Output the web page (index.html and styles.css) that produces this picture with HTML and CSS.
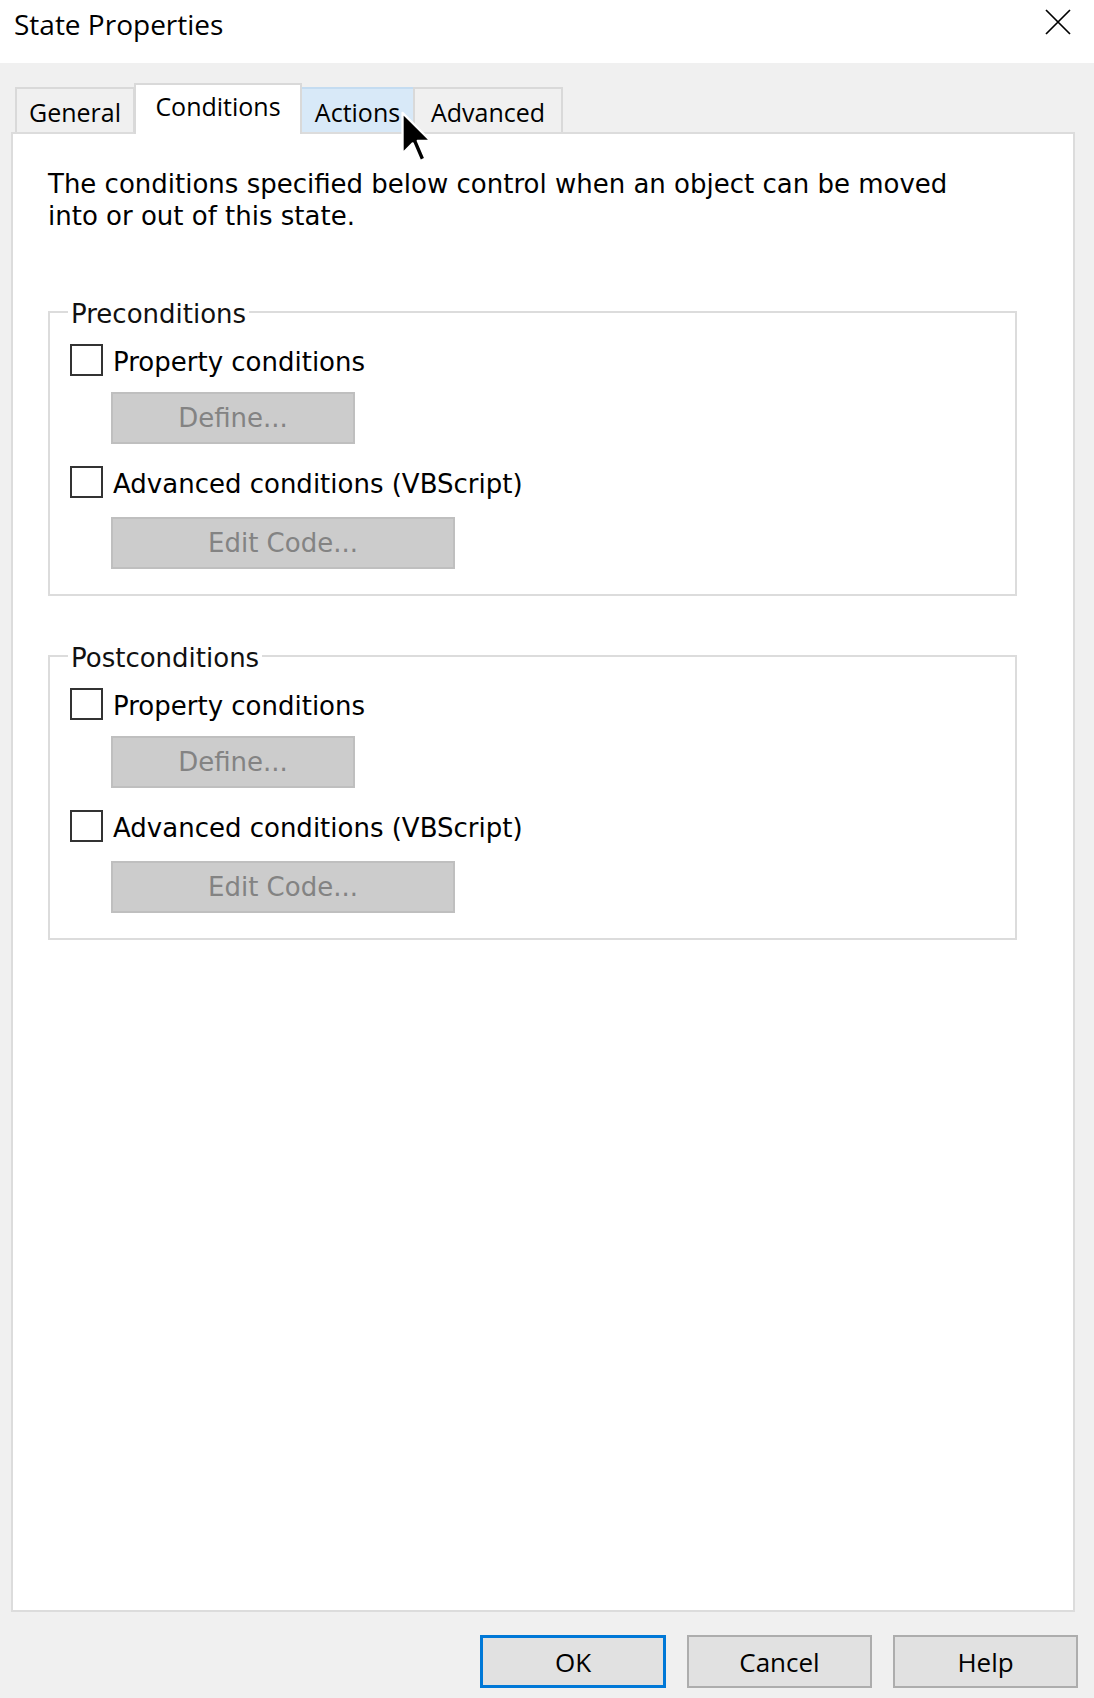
FILE: index.html
```html
<!DOCTYPE html>
<html lang="en">
<head>
    <meta charset="UTF-8">
    <meta name="viewport" content="width=device-width, initial-scale=1.0">
    <title>State Properties</title>
    <link rel="stylesheet" href="styles.css">
</head>
<body>
    <!-- Title bar -->
    <div class="titlebar">
        <span class="title">State Properties</span>
        <svg class="close" width="26" height="26" viewBox="0 0 26 26">
            <path d="M1 1 L25 25 M25 1 L1 25" stroke="#000" stroke-width="1.7" fill="none"/>
        </svg>
    </div>

    <!-- Tabs -->
    <div class="tabs">
        <div class="tab tab-general">General</div>
        <div class="tab tab-active">Conditions</div>
        <div class="tab tab-hover">Actions</div>
        <div class="tab tab-advanced">Advanced</div>
    </div>

    <div class="panel">
        <p class="intro">The conditions specified below control when an object can be moved into or out of this state.</p>

        <fieldset class="group">
            <legend>Preconditions</legend>
            <label class="option"><span class="check"></span><span class="option-text">Property conditions</span></label>
            <button class="btn-off btn-define" disabled>Define...</button>
            <label class="option option-next"><span class="check"></span><span class="option-text">Advanced conditions (VBScript)</span></label>
            <button class="btn-off btn-code" disabled>Edit Code...</button>
        </fieldset>

        <fieldset class="group group-post">
            <legend>Postconditions</legend>
            <label class="option"><span class="check"></span><span class="option-text">Property conditions</span></label>
            <button class="btn-off btn-define" disabled>Define...</button>
            <label class="option option-next"><span class="check"></span><span class="option-text">Advanced conditions (VBScript)</span></label>
            <button class="btn-off btn-code" disabled>Edit Code...</button>
        </fieldset>
    </div>

    <div class="footer">
        <button class="btn btn-default">OK</button>
        <button class="btn">Cancel</button>
        <button class="btn">Help</button>
    </div>

    <!-- mouse pointer over the Actions tab -->
    <svg class="cursor" width="33" height="54" viewBox="0 0 13 21">
        <path d="M1 1 V17 L5 13 L8 20 L10 19 L7 12 H12 Z" fill="#000" stroke="#fff" stroke-width="0.9" stroke-linejoin="round"/>
    </svg>
</body>
</html>
```

FILE: styles.css
```css
body {
    margin: 0;
    padding: 0;
    width: 1094px;
    height: 1698px;
    background-color: #f0f0f0;
    font-family: "DejaVu Sans", Verdana, sans-serif;
    color: #000;
    position: relative;
    overflow: hidden;
}
.titlebar {
    height: 63px;
    background: #ffffff;
    display: flex;
    justify-content: space-between;
    align-items: flex-start;
    box-sizing: border-box;
    padding: 4px 23px 0 14px;
}
.title {
    font-family: "Open Sans", "Noto Sans", sans-serif;
    font-size: 28px;
    line-height: 40px;
    color: #000;
}
.close {
    margin-top: 5px;
}
.tabs {
    display: flex;
    align-items: flex-end;
    padding: 20px 0 0 15px;
}
.tab {
    box-sizing: border-box;
    height: 45px;
    padding: 6px 0 3px;
    border: 2px solid #d9d9d9;
    border-bottom: none;
    background: #f0f0f0;
    font-family: "Open Sans", "Noto Sans", sans-serif;
    font-size: 25px;
    line-height: 34px;
    text-align: center;
    color: #000;
}
.tab-general {
    width: 120px;
}
.tab-active {
    width: 168px;
    height: 51px;
    margin: 0 0 -2px -1px;
    padding-top: 4px;
    background: #ffffff;
    position: relative;
    z-index: 1;
}
.tab-hover {
    width: 115px;
    margin-left: -2px;
    background: #d8e9f8;
    border-color: #c4dcf1;
}
.tab-advanced {
    width: 150px;
    margin-left: -2px;
}
.panel {
    box-sizing: border-box;
    width: 1064px;
    height: 1480px;
    margin-left: 11px;
    padding: 34px 0 0 35px;
    background: #ffffff;
    border: 2px solid #dcdcdc;
}
.intro {
    margin: 0;
    max-width: 950px;
    font-size: 26px;
    line-height: 32px;
}
.group {
    box-sizing: border-box;
    width: 969px;
    margin: 65px 0 0;
    padding: 17px 0 25px 20px;
    border: 2px solid #dcdcdc;
    min-inline-size: 0;
}
.group-post {
    margin-top: 45px;
}
.group legend {
    margin-left: -2px;
    padding: 4px 3px 0;
    font-size: 26px;
    line-height: 26px;
    color: #111;
}
.option {
    display: flex;
    align-items: center;
    height: 32px;
}
.option-next {
    margin-top: 22px;
}
.check {
    box-sizing: border-box;
    width: 33px;
    height: 32px;
    border: 2px solid #333;
    background: #fff;
}
.option-text {
    margin-left: 10px;
    padding-top: 4px;
    font-size: 26px;
    line-height: 28px;
}
.btn-off {
    display: block;
    box-sizing: border-box;
    height: 52px;
    margin: 16px 0 0 41px;
    background: #cccccc;
    border: 2px solid #bfbfbf;
    color: #838383;
    font-family: "DejaVu Sans", Verdana, sans-serif;
    font-size: 26px;
    padding: 0;
}
.btn-define {
    width: 244px;
}
.btn-code {
    width: 344px;
    margin-top: 19px;
}
.footer {
    display: flex;
    justify-content: flex-end;
    gap: 21px;
    margin-top: 23px;
    padding-right: 16px;
}
.btn {
    box-sizing: border-box;
    width: 185px;
    height: 53px;
    background: #e1e1e1;
    border: 2px solid #adadad;
    font-family: "Open Sans", "Noto Sans", sans-serif;
    font-size: 26px;
    color: #000;
    padding: 0;
}
.btn-default {
    width: 186px;
    border: 3px solid #0078d7;
}
.cursor {
    position: absolute;
    left: 400px;
    top: 110px;
}
```
